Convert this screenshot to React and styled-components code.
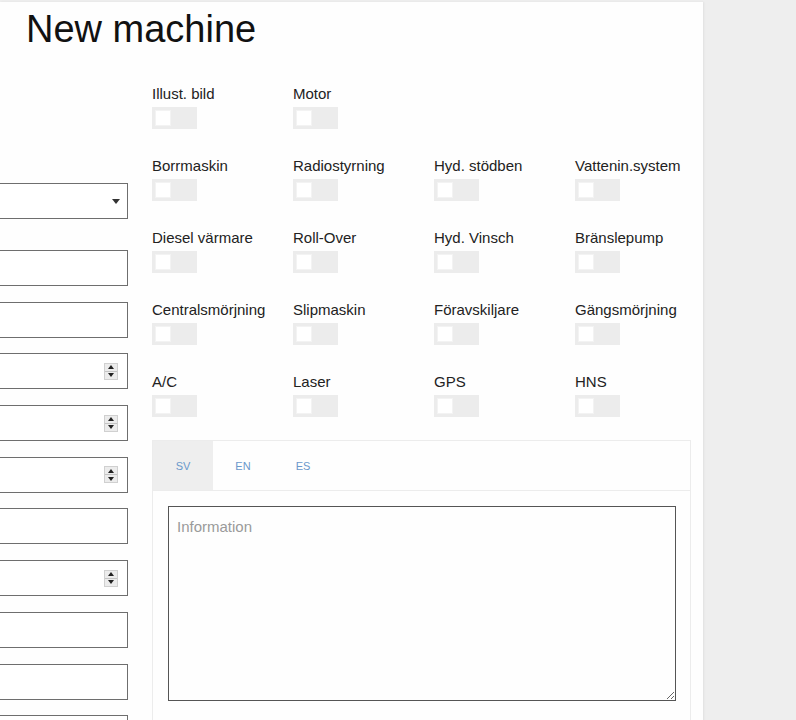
import { createGlobalStyle, styled } from 'styled-components';

const GlobalStyle = createGlobalStyle`
  html, body {
    margin: 0;
    padding: 0;
    background-color: #eeeeee;
    font-family: "Liberation Sans", Arial, sans-serif;
    overflow: hidden;
  }
`;

const equipmentRows = [
  ['Illust. bild', 'Motor'],
  ['Borrmaskin', 'Radiostyrning', 'Hyd. stödben', 'Vattenin.system'],
  ['Diesel värmare', 'Roll-Over', 'Hyd. Vinsch', 'Bränslepump'],
  ['Centralsmörjning', 'Slipmaskin', 'Föravskiljare', 'Gängsmörjning'],
  ['A/C', 'Laser', 'GPS', 'HNS'],
];

const leftFields = [
  { kind: 'select', extraGap: true },
  { kind: 'text' },
  { kind: 'text' },
  { kind: 'number' },
  { kind: 'number' },
  { kind: 'number' },
  { kind: 'text' },
  { kind: 'number' },
  { kind: 'text' },
  { kind: 'text' },
  { kind: 'text' },
];

const languages = ['SV', 'EN', 'ES'];

export default function App() {
  return (
    <>
      <GlobalStyle />
      <Page>
        <Panel>
          <Title>New machine</Title>
          <FormBody>
            <LeftColumn>
              {leftFields.map((field, i) => (
                <Field key={i} $extraGap={field.extraGap}>
                  <FieldInput type="text" readOnly />
                  {field.kind === 'select' && <SelectArrow />}
                  {field.kind === 'number' && (
                    <Spinner>
                      <SpinButton><SpinArrow $up /></SpinButton>
                      <SpinButton><SpinArrow /></SpinButton>
                    </Spinner>
                  )}
                </Field>
              ))}
            </LeftColumn>

            <RightColumn>
              <ToggleGrid>
                {equipmentRows.map((row, r) =>
                  [0, 1, 2, 3].map((c) =>
                    row[c] ? (
                      <ToggleItem key={`${r}-${c}`}>
                        <ToggleLabel>{row[c]}</ToggleLabel>
                        <Toggle>
                          <Knob />
                        </Toggle>
                      </ToggleItem>
                    ) : (
                      <span key={`${r}-${c}`} />
                    )
                  )
                )}
              </ToggleGrid>

              <TabsPanel>
                <TabList>
                  {languages.map((lang, i) => (
                    <Tab key={lang} $active={i === 0}>{lang}</Tab>
                  ))}
                </TabList>
                <TabBody>
                  <InfoArea placeholder="Information" />
                </TabBody>
              </TabsPanel>
            </RightColumn>
          </FormBody>
        </Panel>
      </Page>
    </>
  );
}

const Page = styled.div`
  padding-top: 2px;
  width: 796px;
  height: 720px;
  box-sizing: border-box;
  overflow: hidden;
`;

const Panel = styled.div`
  width: 703px;
  min-height: 740px;
  background-color: #fefefe;
  box-shadow: 1px 0 2px rgba(0, 0, 0, 0.06);
`;

const Title = styled.h1`
  margin: 0;
  padding: 5px 0 0 26px;
  font-size: 38px;
  line-height: 44px;
  font-weight: normal;
  color: #111;
`;

const FormBody = styled.div`
  display: grid;
  grid-template-columns: 128px 539px;
  column-gap: 24px;
  margin-top: 34px;
`;

const LeftColumn = styled.div`
  display: flex;
  flex-direction: column;
  padding-top: 98px;
`;

const Field = styled.div`
  display: flex;
  align-items: center;
  height: 36px;
  box-sizing: border-box;
  border: 1px solid #6e6e6e;
  border-left: none;
  background-color: #fff;
  margin-bottom: ${({ $extraGap }) => ($extraGap ? '31px' : '15.7px')};
`;

const FieldInput = styled.input`
  flex: 1;
  min-width: 0;
  height: 100%;
  border: none;
  background: transparent;
  outline: none;
  font-family: inherit;
  font-size: 15px;
`;

const SelectArrow = styled.span`
  width: 0;
  height: 0;
  margin-right: 7px;
  border-left: 4px solid transparent;
  border-right: 4px solid transparent;
  border-top: 5px solid #333;
`;

const Spinner = styled.div`
  display: flex;
  flex-direction: column;
  width: 12px;
  margin-right: 9px;
  border: 1px solid #d0d0d0;
  background-color: #ececec;
`;

const SpinButton = styled.div`
  display: flex;
  align-items: center;
  justify-content: center;
  height: 7px;

  & + & {
    border-top: 1px solid #c4c4c4;
  }
`;

const SpinArrow = styled.span`
  width: 0;
  height: 0;
  border-left: 3px solid transparent;
  border-right: 3px solid transparent;
  ${({ $up }) =>
    $up ? 'border-bottom: 4px solid #222;' : 'border-top: 4px solid #222;'}
`;

const RightColumn = styled.div`
  display: flex;
  flex-direction: column;
`;

const ToggleGrid = styled.div`
  display: grid;
  grid-template-columns: repeat(4, 141px);
  row-gap: 28px;
`;

const ToggleItem = styled.div`
  display: flex;
  flex-direction: column;
  align-items: flex-start;
  gap: 4px;
`;

const ToggleLabel = styled.label`
  font-size: 15px;
  line-height: 17px;
  color: #222;
  white-space: nowrap;
`;

const Toggle = styled.div`
  display: flex;
  align-items: center;
  width: 45px;
  height: 22px;
  margin-top: 1px;
  padding: 0 3px;
  box-sizing: border-box;
  background-color: #ececec;
`;

const Knob = styled.div`
  width: 16px;
  height: 16px;
  background-color: #fff;
  box-shadow: inset 0 0 0 1px #f3f3f3;
`;

const TabsPanel = styled.div`
  margin-top: 23px;
  border: 1px solid #ececec;
  background-color: #fefefe;
`;

const TabList = styled.div`
  display: flex;
  height: 49px;
  border-bottom: 1px solid #ececec;
`;

const Tab = styled.div`
  display: flex;
  align-items: center;
  justify-content: center;
  width: 60px;
  font-size: 11px;
  color: #6a98cb;
  background-color: ${({ $active }) => ($active ? '#eeeeee' : 'transparent')};
  cursor: pointer;
`;

const TabBody = styled.div`
  padding: 15px 14px 20px 15px;
`;

const InfoArea = styled.textarea`
  display: block;
  width: 100%;
  height: 195px;
  box-sizing: border-box;
  border: 1px solid #555;
  border-radius: 0;
  padding: 11px 8px;
  font-family: inherit;
  font-size: 15px;
  line-height: 18px;
  color: #222;
  background-color: #fefefe;
  outline: none;

  &::placeholder {
    color: #9a9a9a;
  }
`;
